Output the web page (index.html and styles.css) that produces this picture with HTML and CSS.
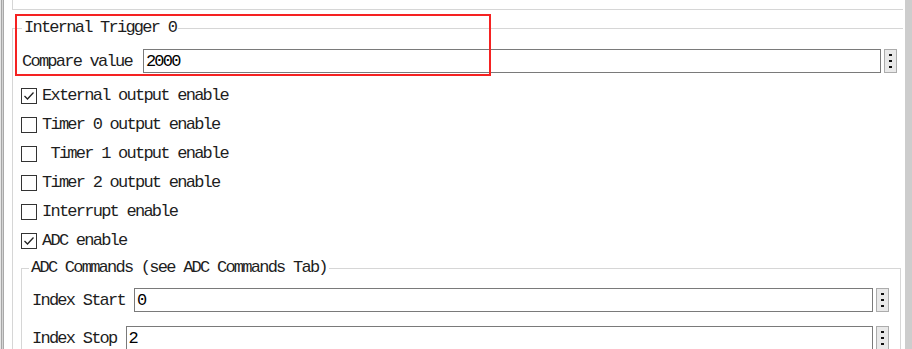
FILE: index.html
```html
<!DOCTYPE html>
<html lang="en">
<head>
  <meta charset="UTF-8">
  <title>Trigger settings</title>
  <link rel="stylesheet" href="styles.css">
</head>
<body>

  <div class="window">
    <div class="splitter"></div>

    <div class="pane">
      <div class="prev-group"></div>

      <fieldset class="group trigger">
        <legend>Internal Trigger 0</legend>

        <div class="field">
          <label>Compare value</label>
          <input class="value" type="text" value="2000">
          <button class="more"><svg width="3" height="14" viewBox="0 0 3 14"><rect x="0" y="0" width="3" height="2"/><rect x="0" y="6" width="3" height="2"/><rect x="0" y="12" width="3" height="2"/></svg></button>
        </div>

        <div class="checks">
          <div class="check"><span class="box on"><svg width="14" height="14" viewBox="0 0 14 14"><polyline points="2.5,7 5.5,10 11.5,3.5"/></svg></span><span class="text">External output enable</span></div>
          <div class="check"><span class="box"></span><span class="text">Timer 0 output enable</span></div>
          <div class="check"><span class="box"></span><span class="text"> Timer 1 output enable</span></div>
          <div class="check"><span class="box"></span><span class="text">Timer 2 output enable</span></div>
          <div class="check"><span class="box"></span><span class="text">Interrupt enable</span></div>
          <div class="check"><span class="box on"><svg width="14" height="14" viewBox="0 0 14 14"><polyline points="2.5,7 5.5,10 11.5,3.5"/></svg></span><span class="text">ADC enable</span></div>
        </div>

        <fieldset class="group adc">
          <legend>ADC Commands (see ADC Commands Tab)</legend>

          <div class="field">
            <label>Index Start</label>
            <input class="value" type="text" value="0">
            <button class="more"><svg width="3" height="14" viewBox="0 0 3 14"><rect x="0" y="0" width="3" height="2"/><rect x="0" y="6" width="3" height="2"/><rect x="0" y="12" width="3" height="2"/></svg></button>
          </div>

          <div class="field">
            <label>Index Stop</label>
            <input class="value" type="text" value="2">
            <button class="more"><svg width="3" height="14" viewBox="0 0 3 14"><rect x="0" y="0" width="3" height="2"/><rect x="0" y="6" width="3" height="2"/><rect x="0" y="12" width="3" height="2"/></svg></button>
          </div>
        </fieldset>
      </fieldset>
    </div>

    <div class="scrollbar"></div>

    <!-- annotation drawn over the screenshot -->
    <div class="highlight"></div>
  </div>

</body>
</html>
```

FILE: styles.css
```css
body {
  margin: 0;
  padding: 0;
  background: #fff;
  font-family: "Liberation Mono", "DejaVu Sans Mono", monospace;
  font-size: 17px;
  letter-spacing: -1.75px;
  color: #1e1e1e;
}

.window {
  position: relative;
  display: flex;
  width: 912px;
  height: 349px;
  overflow: hidden;
}

.splitter {
  width: 4px;
  flex-shrink: 0;
  background: linear-gradient(to right, #e6e6e6 0 1px, #a6a6a6 1px 2px, #d4d4d4 2px 3px, #a9a9a9 3px 4px);
}

.pane {
  flex: 1;
  min-width: 0;
  padding-left: 8px;
}

.scrollbar {
  width: 7px;
  flex-shrink: 0;
  background: #cdcdcd;
}

.prev-group {
  box-sizing: border-box;
  height: 10px;
  margin-right: 2px;
  border-left: 1px solid #d6d6d6;
  border-bottom: 1px solid #d6d6d6;
}

.group {
  min-width: 0;
  margin: 0;
  border: 1px solid #d6d6d6;
}

.group legend {
  padding: 0 2px;
  line-height: 20px;
}

.trigger {
  margin: 8px 2px 0 0;
  padding: 11px 6px 0 9px;
  border-right: none;
}

.adc {
  margin: 3px -4px 0 -1px;
  padding: 10px 11px 0 7px;
}

.field {
  display: flex;
  align-items: center;
  height: 24px;
}

.adc .field + .field {
  margin-top: 14px;
}

.field label {
  margin-right: 11px;
  white-space: pre;
}

.adc .field label {
  padding-left: 3px;
  margin-right: 9px;
}

.value {
  flex: 1;
  min-width: 0;
  box-sizing: border-box;
  height: 24px;
  margin: 0;
  padding: 0 2px;
  border: 1px solid #7a7a7a;
  border-radius: 0;
  font: inherit;
  letter-spacing: inherit;
  color: #000;
  background: #fff;
  outline: none;
}

.more {
  box-sizing: border-box;
  width: 13px;
  height: 24px;
  margin: 0 0 0 3px;
  padding: 0;
  border: 1px solid #acacac;
  background: #e9e9e9;
  display: flex;
  align-items: center;
  justify-content: center;
}

.more svg {
  fill: #111;
}

.checks {
  margin: 8px 0 0 -1px;
}

.check {
  display: flex;
  align-items: center;
  height: 29px;
}

.check .text {
  white-space: pre;
  margin-left: 5px;
}

.box {
  box-sizing: border-box;
  width: 16px;
  height: 16px;
  border: 1px solid #333;
  background: #fff;
  display: flex;
  align-items: center;
  justify-content: center;
}

.box svg polyline {
  fill: none;
  stroke: #222;
  stroke-width: 1.3;
}

.highlight {
  position: absolute;
  left: 15px;
  top: 14px;
  width: 476px;
  height: 62px;
  box-sizing: border-box;
  border: 2px solid #f52222;
}
```
